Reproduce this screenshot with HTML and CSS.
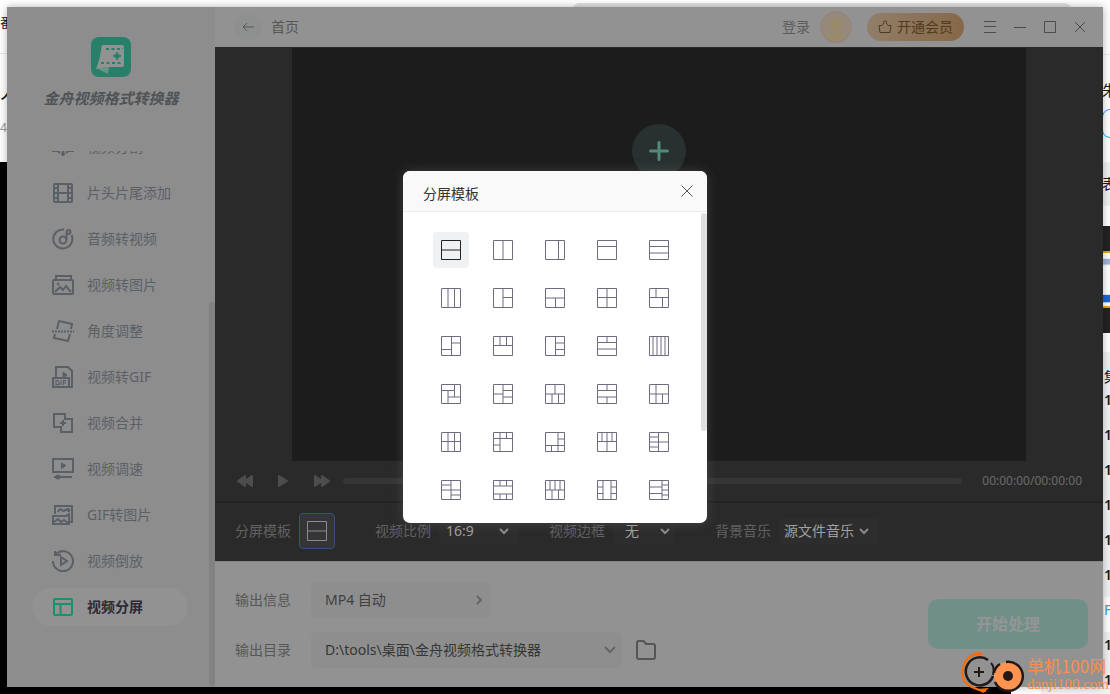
FILE: index.html
```html
<!DOCTYPE html>
<html lang="zh-CN">
<head>
<meta charset="utf-8">
<title>金舟视频格式转换器</title>
<link rel="stylesheet" href="styles.css">
</head>
<body>
<div class="desktop" aria-hidden="true">
  <div class="tab-strip"></div>
  <div class="page-left">
    <div class="page-bar">番</div>
    <div class="page-title">人</div>
    <div class="page-count">4</div>
    <div class="page-video"></div>
  </div>
  <div class="page-right">
    <div class="r-bar"></div>
    <div class="r-author"><span>朱</span><i class="r-pill"></i></div>
    <div class="r-list-head">表</div>
    <div class="r-thumb"><i></i></div>
    <div class="r-episodes">
      <span class="r-head">集</span>
      <span>1</span><span>1</span><span>1</span><span>1</span><span>1</span><span>1</span>
      <span class="r-current">F</span>
      <span>1</span><span>1</span>
    </div>
  </div>
  <div class="page-foot"></div>
</div>

<div class="window">
  <aside class="sidebar">
    <div class="brand">
      <svg class="brand-logo" viewBox="0 0 40 40">
        <rect width="40" height="40" rx="8" fill="#28806a"/>
        <path d="M12 8h19q2 0 2 2v18q0 2-2 2H18L5 32q4-9 5.500-22Q10 8 12 8z" fill="#929292"/>
        <path d="M5 31l13-1-1 7z" fill="#6b9386"/>
        <path d="M15 12h17M10 26h21" stroke="#28806a" stroke-width="2" stroke-dasharray="3 2.500" fill="none"/>
        <path d="M26 15q.6 3.400 4 4-3.400.6-4 4-.6-3.400-4-4 3.400-.6 4-4z" fill="#28806a" stroke="#28806a"/>
      </svg>
      <h1 class="brand-name">金舟视频格式转换器</h1>
    </div>
    <nav class="nav">
      <a class="nav-item" href="#"><svg viewBox="0 0 22 22"><path d="M4 2l9 13M18 2L9 15M0 15h6l2 2M22 15h-6l-2 2M11 15v4"/><circle cx="11" cy="18" r="1"/></svg>视频分割</a>
      <a class="nav-item" href="#"><svg viewBox="0 0 22 22"><rect x="2" y="2" width="18" height="18" rx="1"/><path d="M6 2v18M16 2v18M6 11h10M2 6h4M2 11h4M2 16h4M16 6h4M16 11h4M16 16h4"/></svg>片头片尾添加</a>
      <a class="nav-item" href="#"><svg viewBox="0 0 22 22"><path d="M12 1.500A9.500 9.500 0 1 0 19.500 7"/><circle cx="11" cy="12" r="3.500"/><path d="M14.500 12V5q0-3 2-3t2 2-3 2"/></svg>音频转视频</a>
      <a class="nav-item" href="#"><svg viewBox="0 0 22 22"><path d="M4 5V2h15v3"/><rect x="1" y="6" width="20" height="14" rx="1"/><path d="M3 18l5-5 3 3 3-4 5 6"/><circle cx="6" cy="10" r="1" fill="currentColor" stroke-width="1"/></svg>视频转图片</a>
      <a class="nav-item" href="#"><svg viewBox="0 0 22 22"><path d="M5 9l2-8 13 3-1 5M3 14l-1 4 14 3 2-7"/><path d="M0 11.500h22" stroke-dasharray="2 1"/></svg>角度调整</a>
      <a class="nav-item" href="#"><svg viewBox="0 0 22 22"><path d="M4 11V1h12l4 4v16h-3"/><path d="M1 12h16v9H1z"/><path d="M11 6l4 3-4 3z" fill="currentColor" stroke-width="1"/><path stroke-width="1.200" d="M7 14.600H4v4h3v-2H6M9 14v5M11.500 19v-4.400H14M11.500 17H14"/></svg>视频转GIF</a>
      <a class="nav-item" href="#"><svg viewBox="0 0 22 22"><path d="M2 2h11v5h7v13H9v-5H2z"/><path d="M11 8v6M8 11h6"/></svg>视频合并</a>
      <a class="nav-item" href="#"><svg viewBox="0 0 22 22"><path d="M1 1h20v13H1zM2 19h18"/><path d="M9.500 5l4.500 2.500-4.500 3z" fill="currentColor" stroke-width="1"/><circle cx="6" cy="19" r="1.500" fill="currentColor"/></svg>视频调速</a>
      <a class="nav-item" href="#"><svg viewBox="0 0 22 22"><path d="M3 10V2h17v16h-3"/><path d="M1 12h13l3-2v10H1zM2 18l4-3 3 3 3-2 4 3M6 8q2-4 4-2t3 0l3-1"/><circle cx="16.500" cy="6" r="1"/></svg>GIF转图片</a>
      <a class="nav-item" href="#"><svg viewBox="0 0 22 22"><path d="M4 4a10 10 0 1 1-3 7M3 1v4h6"/><path d="M9 7l6 4-6 4z"/></svg>视频倒放</a>
      <a class="nav-item active" href="#" aria-current="page"><svg viewBox="0 0 22 22"><rect x="2" y="3" width="18" height="16" rx="1"/><path d="M2 8h18M8.500 8v11"/></svg>视频分屏</a>
    </nav>
    <div class="nav-scroll"></div>
  </aside>

  <main class="main">
    <header class="topbar">
      <button class="back" aria-label="返回"><svg viewBox="0 0 26 26"><path d="M8 13h11M12 9l-4 4 4 4"/></svg></button>
      <span class="crumb">首页</span>
      <a class="login" href="#">登录</a>
      <svg class="avatar" viewBox="0 0 32 32"><circle cx="16" cy="16" r="15.500" fill="#95897b" stroke="#94817f"/><circle cx="16" cy="13" r="6.500" fill="#998a6c"/><path d="M6 27q1-4 7-5v-3h6v3q6 1 7 5-10 7-20 0z" fill="#998a6c"/></svg>
      <button class="vip"><svg viewBox="0 0 14 14"><path d="M1 5.500h2.500L5.500 4V2.500Q5.500 1 7 1t1.500 1.500V4l2 1.500H13L12 12.500H2z"/></svg>开通会员</button>
      <div class="win-buttons">
        <button aria-label="菜单"><svg viewBox="0 0 12 12"><path d="M0 .5h12M0 5.500h12M0 11.500h12"/></svg></button>
        <button aria-label="最小化"><svg viewBox="0 0 12 12"><path d="M0 6.500h12"/></svg></button>
        <button aria-label="最大化"><svg viewBox="0 0 12 12"><path d="M.5.5h11v11H.5z"/></svg></button>
        <button aria-label="关闭"><svg viewBox="0 0 12 12"><path d="M1 1l10 10M11 1L1 11"/></svg></button>
      </div>
    </header>

    <section class="stage">
      <div class="video"><button class="add" aria-label="添加"><svg viewBox="0 0 20 20"><path d="M10 1.500v17M1.500 10h17"/></svg></button></div>
    </section>

    <div class="player">
      <button aria-label="快退"><svg viewBox="0 0 16 16"><path d="M8 3v10L1 8zM15 3v10L8 8z"/></svg></button>
      <button aria-label="播放"><svg viewBox="0 0 16 16"><path d="M4 3v10l8-5z"/></svg></button>
      <button aria-label="快进"><svg viewBox="0 0 16 16"><path d="M2 3v10l7-5zM9 3v10l7-5z"/></svg></button>
      <div class="track"></div>
      <time>00:00:00/00:00:00</time>
    </div>

    <div class="settings">
      <div class="field spaced"><span>分屏模板</span><button class="tpl-current" aria-label="选择分屏模板"><svg viewBox="0 0 20 20"><path d="M.5.5h19v19H.5zM0 10h20"/></svg></button></div>
      <div class="field"><label for="ratio">视频比例</label><div class="pick ratio"><select id="ratio"><option>16:9</option></select><svg viewBox="0 0 10 6"><path d="M1 1l4 4 4-4"/></svg></div></div>
      <div class="field spaced"><label for="border">视频边框</label><div class="pick border"><select id="border"><option>无</option></select><svg viewBox="0 0 10 6"><path d="M1 1l4 4 4-4"/></svg></div></div>
      <div class="field"><label for="music">背景音乐</label><div class="pick music"><select id="music"><option>源文件音乐</option></select><svg viewBox="0 0 10 6"><path d="M1 1l4 4 4-4"/></svg></div></div>
    </div>

    <footer class="output">
      <div class="output-rows">
        <div class="row"><label for="format">输出信息</label><button id="format" class="format">MP4 自动<svg viewBox="0 0 6 10"><path d="M1 1l4 4-4 4"/></svg></button></div>
        <div class="row"><label for="dir">输出目录</label><div class="pick dir"><select id="dir"><option>D:\tools\桌面\金舟视频格式转换器</option></select><svg viewBox="0 0 10 6"><path d="M0 0l5 5 5-5"/></svg></div>
          <button class="folder" aria-label="打开文件夹"><svg viewBox="0 0 20 20"><path d="M1 3q0-2 2-2h4.500l2.500 3h7q2 0 2 2v11q0 2-2 2H3q-2 0-2-2z"/></svg></button></div>
      </div>
      <button class="start">开始处理</button>
    </footer>
  </main>

  <div class="dialog" role="dialog" aria-labelledby="dlg-title">
    <div class="dialog-head">
      <h2 id="dlg-title">分屏模板</h2>
      <button class="dialog-close" aria-label="关闭"><svg viewBox="0 0 12 12"><path d="M.5.5l11 11M11.500.5l-11 11"/></svg></button>
    </div>
    <div class="templates">
      <button class="tpl selected"><svg viewBox="0 0 20 20"><path d="M.5.5h19v19H.5zM0 10h20"/></svg></button>
      <button class="tpl"><svg viewBox="0 0 20 20"><path d="M.5.5h19v19H.5zM10 0v20"/></svg></button>
      <button class="tpl"><svg viewBox="0 0 20 20"><path d="M.5.5h19v19H.5zM13.500 0v20"/></svg></button>
      <button class="tpl"><svg viewBox="0 0 20 20"><path d="M.5.5h19v19H.5zM0 6.500h20"/></svg></button>
      <button class="tpl"><svg viewBox="0 0 20 20"><path d="M.5.5h19v19H.5zM0 6.500h20M0 13h20"/></svg></button>

      <button class="tpl"><svg viewBox="0 0 20 20"><path d="M.5.5h19v19H.5zM7 0v20M13.500 0v20"/></svg></button>
      <button class="tpl"><svg viewBox="0 0 20 20"><path d="M.5.5h19v19H.5zM10 0v20M10 9.500h10"/></svg></button>
      <button class="tpl"><svg viewBox="0 0 20 20"><path d="M.5.5h19v19H.5zM0 10h20M10.500 10v10"/></svg></button>
      <button class="tpl"><svg viewBox="0 0 20 20"><path d="M.5.5h19v19H.5zM10 0v20M0 9.500h20"/></svg></button>
      <button class="tpl"><svg viewBox="0 0 20 20"><path d="M.5.5h19v19H.5zM0 9.500h20M7 0v9M13.500 10v10"/></svg></button>

      <button class="tpl"><svg viewBox="0 0 20 20"><path d="M.5.5h19v19H.5zM10.500 0v20M0 13.500h10M10 7h10"/></svg></button>
      <button class="tpl"><svg viewBox="0 0 20 20"><path d="M.5.5h19v19H.5zM0 9.500h20M7 0v9M13.500 0v9"/></svg></button>
      <button class="tpl"><svg viewBox="0 0 20 20"><path d="M.5.5h19v19H.5zM10.500 0v20M11 7h9M11 13.500h9"/></svg></button>
      <button class="tpl"><svg viewBox="0 0 20 20"><path d="M.5.5h19v19H.5zM0 6.500h20M10 0v6M0 13h20"/></svg></button>
      <button class="tpl"><svg viewBox="0 0 20 20"><path d="M.5.5h19v19H.5zM4 0v20M8 0v20M12 0v20M16 0v20"/></svg></button>

      <button class="tpl"><svg viewBox="0 0 20 20"><path d="M.5.5h19v19H.5zM0 6.500h13M13.500 0v13M7 7v13M7 13h13"/></svg></button>
      <button class="tpl"><svg viewBox="0 0 20 20"><path d="M.5.5h19v19H.5zM10 0v20M0 10h10M10 6.500h10M10 13h10"/></svg></button>
      <button class="tpl"><svg viewBox="0 0 20 20"><path d="M.5.5h19v19H.5zM0 10h20M10 0v10M7 10v10M13.500 10v10"/></svg></button>
      <button class="tpl"><svg viewBox="0 0 20 20"><path d="M.5.5h19v19H.5zM0 6.500h20M0 13h20M10 0v6M10 13v7"/></svg></button>
      <button class="tpl"><svg viewBox="0 0 20 20"><path d="M.5.5h19v19H.5zM0 10h20M7 0v20M13.500 10v10"/></svg></button>

      <button class="tpl"><svg viewBox="0 0 20 20"><path d="M.5.5h19v19H.5zM7 0v20M13.500 0v20M0 9.500h20"/></svg></button>
      <button class="tpl"><svg viewBox="0 0 20 20"><path d="M.5.5h19v19H.5zM0 6.500h20M7 0v20M13.500 0v6M0 13h7"/></svg></button>
      <button class="tpl"><svg viewBox="0 0 20 20"><path d="M.5.5h19v19H.5zM13 0v20M0 13.500h20M13 7h7M6.500 14v6"/></svg></button>
      <button class="tpl"><svg viewBox="0 0 20 20"><path d="M.5.5h19v19H.5zM0 9.500h20M5 0v9M10 0v20M15 0v9"/></svg></button>
      <button class="tpl"><svg viewBox="0 0 20 20"><path d="M.5.5h19v19H.5zM9.500 0v20M0 5h9M0 10h20M0 15h9"/></svg></button>

      <button class="tpl"><svg viewBox="0 0 20 20"><path d="M.5.5h19v19H.5zM10 0v20M0 5h10M0 10h20M10 15h10"/></svg></button>
      <button class="tpl"><svg viewBox="0 0 20 20"><path d="M.5.5h19v19H.5zM0 6h20M0 14h20M7 0v6M13.500 0v6M7 14v6M13.500 14v6"/></svg></button>
      <button class="tpl"><svg viewBox="0 0 20 20"><path d="M.5.5h19v19H.5zM0 10h20M5 0v10M10 0v10M15 0v10M7 10v10M13.500 10v10"/></svg></button>
      <button class="tpl"><svg viewBox="0 0 20 20"><path d="M.5.5h19v19H.5zM6 0v20M14 0v20M0 7h6M0 13.500h6M14 7h6M14 13.500h6"/></svg></button>
      <button class="tpl"><svg viewBox="0 0 20 20"><path d="M.5.5h19v19H.5zM13 0v20M0 7h13M0 13.500h13M13 5h7M13 10h7M13 15h7"/></svg></button>
    </div>
    <div class="dialog-scroll"></div>
  </div>
</div>

<div class="watermark">
  <svg viewBox="0 0 64 42">
    <path d="M21 3Q5 2 2 17t11 20q6 3 12 3" fill="none" stroke="#ff6a00" stroke-width="2"/>
    <path d="M12 3q6-4 10 0l-8 2zM16 38l12-1-6 5z" fill="#ff6a00"/>
    <path d="M27 9A14 14 0 1 0 32 25" fill="none" stroke="#231815" stroke-width="2.500"/>
    <path d="M18 16v10M13 21h10" stroke="#231815" stroke-width="2"/>
    <path d="M30 12q4 4 2 12" fill="none" stroke="#231815" stroke-width="2"/>
    <circle cx="47" cy="25" r="14" fill="#ff934f"/>
    <path d="M45 11a14.500 14.500 0 1 1-11 20M33 22q1-6 6-9" fill="none" stroke="#231815" stroke-width="2.500"/>
    <circle cx="47" cy="25" r="5" fill="#231815"/>
  </svg>
  <div class="watermark-text"><span class="wm-name">单机100网</span><span class="wm-url">danji100.com</span></div>
</div>
</body>
</html>
```

FILE: styles.css
```css
* { box-sizing: border-box; }
body {
  margin: 0;
  height: 100vh;
  padding: 7px;
  overflow: hidden;
  position: relative;
  background: #fff;
  font: 14px/20px "Noto Sans", "Noto Sans CJK SC", sans-serif;
}
button, select {
  font: inherit;
  color: inherit;
  border: 0;
  padding: 0;
  background: none;
}
a { color: inherit; text-decoration: none; }
svg { display: block; fill: none; stroke: currentColor; flex: none; }
h1, h2 { margin: 0; font: inherit; }

/* Desktop behind the window */
.desktop { position: absolute; inset: 0; overflow: hidden; color: #18191c; }
.tab-strip { position: absolute; top: 3px; left: 572px; right: 38px; height: 20px; border-radius: 8px; background: #e3e3e3; }
.page-left { position: absolute; inset: 0 auto 0 0; width: 8px; display: flex; flex-direction: column; overflow: hidden; }
.page-bar { height: 54px; padding-top: 12px; border-bottom: 1px solid #e8e8e8; font-size: 13px; }
.page-title { height: 64px; padding-top: 22px; font-size: 20px; line-height: 32px; }
.page-count { height: 44px; color: #9499a0; font-size: 12px; }
.page-video { flex: 1; background: #000; }
.page-right { position: absolute; inset: 0 0 0 auto; width: 8px; display: flex; flex-direction: column; overflow: hidden; background: #f1f2f3; }
.r-bar { height: 55px; background: #fff; border-bottom: 1px solid #e8e8e8; flex: none; }
.r-author { height: 107px; padding-top: 25px; background: #fff; flex: none; }
.r-author span { display: block; height: 29px; font-size: 15px; }
.r-pill { display: block; width: 60px; height: 29px; border: 1px solid #00aeec; border-radius: 8px; }
.r-list-head { height: 44px; padding-top: 12px; background: #f1f2f3; flex: none; }
.r-thumb { height: 146px; border-top: 20px solid #fff; border-bottom: 19px solid #fff; padding-top: 25px; background: #222; flex: none; }
.r-thumb i { display: block; height: 57px; border: 2px solid #e0a800; border-width: 2px 0; background: linear-gradient(#fff 10%, #9fb4dc 12% 20%, #fff 24% 78%, #1a66d8 80% 92%, #fff 94%); }
.r-episodes { display: flex; flex-direction: column; flex: none; padding-left: 2px; font-weight: 600; }
.r-episodes span { height: 35px; line-height: 25px; }
.r-episodes .r-head { line-height: 50px; font-weight: 400; }
.r-episodes .r-current { color: #4a90e8; background: #fff; font-weight: 400; }
.page-foot { position: absolute; bottom: 0; left: 0; right: 0; height: 8px; background: linear-gradient(90deg, #000 1011px, #fff 1011px 1041px, #f1f2f3 1041px); }

/* Window frame */
.window {
  position: relative;
  height: 100%;
  display: grid;
  grid-template-columns: 208px 1fr;
  background: #929292;
  box-shadow: 0 0 8px rgba(0, 0, 0, .3);
}
.sidebar {
  position: relative;
  min-height: 0;
  display: flex;
  flex-direction: column;
  background: #8d8d8d;
  color: #5b6067;
}
.brand { height: 144px; padding-top: 30px; display: flex; flex-direction: column; align-items: center; gap: 9px; flex: none; }
.brand-logo { width: 40px; height: 40px; stroke: none; }
.brand-name { font-size: 15px; line-height: 24px; font-weight: 700; font-style: italic; color: #505356; white-space: nowrap; }
.nav {
  flex: 1;
  min-height: 0;
  overflow: hidden;
  display: flex;
  flex-direction: column;
  justify-content: flex-end;
  gap: 8px;
  padding: 0 27px 61px 25px;
}
.nav-item { flex: none; height: 38px; padding-left: 20px; display: flex; align-items: center; gap: 13px; border-radius: 19px; }
.nav-item svg { width: 22px; height: 22px; stroke-width: 2; }
.nav-item.active { background: #929292; color: #2c2a36; font-weight: 600; }
.nav-item.active svg { color: #1e8f6d; }
.nav-scroll { position: absolute; right: 0; bottom: 1px; width: 6px; height: 384px; border-radius: 3px; background: #828282; }

.main { min-width: 0; min-height: 0; display: flex; flex-direction: column; }

/* Top bar */
.topbar { height: 40px; flex: none; display: flex; align-items: center; padding: 0 17px 0 20px; color: #565656; }
.back { width: 26px; height: 26px; border-radius: 50%; background: #8d908f; }
.crumb { margin-left: 10px; margin-right: auto; }
.login { color: #5c5c5c; }
.avatar { width: 32px; height: 32px; margin-left: 10px; stroke: none; }
.vip {
  margin: 0 20px 0 15px;
  height: 28px;
  padding: 0 11px;
  display: flex;
  align-items: center;
  gap: 5px;
  border-radius: 14px;
  color: #4f3a1e;
  background: linear-gradient(105deg, #917f6a, #866746);
}
.vip svg { width: 14px; height: 14px; }
.win-buttons { display: flex; gap: 18px; color: #4c4c4c; }
.win-buttons svg { width: 12px; height: 12px; }

/* Preview */
.stage { flex: 1; min-height: 0; padding: 1px 77px 0; background: #2a2a2a; display: flex; }
.video { flex: 1; padding-top: 76px; display: flex; align-items: flex-start; justify-content: center; background: #1c1c1c; }
.add { width: 54px; height: 54px; border-radius: 50%; display: grid; place-items: center; background: #28312f; color: #4f8b78; }
.add svg { width: 20px; height: 20px; stroke-width: 3; stroke-linecap: round; }
.player { height: 40px; flex: none; display: flex; align-items: center; gap: 22px; padding: 0 21px 0 22px; background: #2a2a2a; color: #4d4d4d; }
.player svg { width: 16px; height: 16px; fill: currentColor; stroke-width: 2; stroke-linejoin: round; overflow: visible; }
.track { flex: 1; height: 6px; margin: 0 -2px 0 -8px; border-radius: 3px; background: #363637; }
.player time { font-size: 12px; color: #6a6a6a; }

.settings { height: 60px; flex: none; display: flex; align-items: center; gap: 30px; padding: 0 20px 2px; border-top: 2px solid #222; background: #2a2a2a; color: #616161; }
.field { display: flex; align-items: center; gap: 8px; white-space: nowrap; }
.spaced { margin-right: 10px; }
.tpl-current { width: 36px; height: 36px; display: grid; place-items: center; border: 1px solid #34517f; border-radius: 4px; background: #353537; color: #8c8c8c; }
.tpl-current svg { width: 20px; height: 20px; }

.pick { display: grid; align-items: center; }
.pick select { grid-area: 1 / 1; width: 100%; height: 26px; appearance: none; border-radius: 4px; background: #2d2d2d; color: #a0a0a0; }
.pick svg { grid-area: 1 / 1; justify-self: end; width: 10px; height: 6px; margin-right: 10px; color: #8a8a8a; stroke-width: 2; pointer-events: none; overflow: visible; }
.ratio { width: 80px; }
.ratio select { padding-left: 7px; }
.border { width: 62px; }
.border select { padding-left: 12px; }
.border svg { margin-right: 5px; }
.music { width: 100px; }
.music select { padding-left: 5px; }

/* Output */
.output { flex: none; height: 126px; padding: 20px 15px 0 20px; display: flex; align-items: flex-start; justify-content: space-between; border-top: 1px solid #858585; color: #575757; }
.output-rows { display: flex; flex-direction: column; gap: 14px; }
.row { height: 36px; display: flex; align-items: center; }
.row label { margin-right: 20px; }
.format { width: 180px; height: 36px; padding: 0 9px 0 14px; display: flex; align-items: center; justify-content: space-between; border-radius: 6px; background: #8e8e8e; color: #404040; }
.format svg { width: 6px; height: 10px; color: #666; stroke-width: 2; overflow: visible; }
.dir { width: 311px; }
.dir select { height: 36px; padding-left: 14px; border-radius: 6px; background: #8e8e8e; color: #363636; }
.dir svg { margin-right: 7px; color: #666; }
.folder { margin-left: 14px; color: #555; }
.folder svg { width: 20px; height: 20px; stroke-width: 2; }
.start { width: 160px; height: 50px; margin-top: 17px; border-radius: 10px; background: #708f87; color: #959595; font-size: 16px; font-weight: 700; }

/* Template dialog */
.dialog {
  position: absolute;
  left: 50%;
  top: 50%;
  transform: translate(-50%, -50%);
  width: 304px;
  border-radius: 7px;
  overflow: hidden;
  background: #fff;
  box-shadow: 0 0 12px rgba(120, 120, 120, .35);
}
.dialog-head { height: 41px; padding: 5px 14px 0 20px; display: flex; justify-content: space-between; border-bottom: 1px solid #ececec; background: #f9f9f9; color: #333; }
.dialog-head h2 { line-height: 36px; }
.dialog-close { height: 30px; color: #555; }
.dialog-close svg { width: 12px; height: 12px; }
.templates { display: grid; grid-template-columns: repeat(5, 36px); gap: 12px 16px; padding: 20px 30px 15px; }
.tpl { height: 36px; display: grid; place-items: center; border-radius: 4px; color: #6f6b80; }
.tpl svg { width: 20px; height: 20px; }
.tpl.selected { background: #f0f1f3; color: #222; }
.dialog-scroll { position: absolute; top: 42px; right: 0; width: 6px; height: 218px; border-radius: 3px; background: #dfdfdf; }

/* Site mark */
.watermark { position: absolute; right: 1px; bottom: 1px; display: flex; align-items: flex-end; gap: 2px; color: #f98f50; }
.watermark svg { width: 64px; height: 42px; stroke: none; }
.watermark-text { display: flex; flex-direction: column; white-space: nowrap; }
.wm-name { font: 17px/20px "Noto Sans CJK SC", sans-serif; }
.wm-url { font: 15px/17px "Liberation Serif", serif; }
```
